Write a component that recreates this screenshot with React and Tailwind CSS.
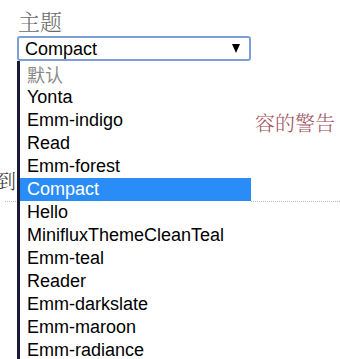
import React from 'react';

const themes = [
  'Yonta',
  'Emm-indigo',
  'Read',
  'Emm-forest',
  'Compact',
  'Hello',
  'MinifluxThemeCleanTeal',
  'Emm-teal',
  'Reader',
  'Emm-darkslate',
  'Emm-maroon',
  'Emm-radiance',
];

const App = () => {
  const selected = 'Compact';

  return (
    <div className="relative w-[340px] h-[359px] overflow-hidden bg-white font-['Liberation_Sans',Arial,sans-serif]">
      <div className="pl-[17px] pt-[7px]">
        <div className="pl-px text-[22px] leading-[28px] text-[#6b6b6b] font-light font-['Noto_Serif_CJK_SC','Noto_Sans_CJK_SC',serif]">
          主题
        </div>
        <div className="mt-px w-[234px] h-[25px] border-2 border-[#7d9fd8] rounded-[3px] flex items-center justify-between pl-[6px] pr-[9px]">
          <span className="text-[18px] leading-none text-black">{selected}</span>
          <svg width="8" height="9" viewBox="0 0 8 9">
            <polygon points="0,0 8,0 4,9" fill="#000" />
          </svg>
        </div>
      </div>

      <div className="mt-[50px] pl-[255px] text-[20px] leading-[24px] text-[#a0505e] font-light font-['Noto_Serif_CJK_SC','Noto_Sans_CJK_SC',serif]">
        容的警告
      </div>
      <div className="mt-[34px] w-[17px] overflow-hidden">
        <div className="-ml-[4px] whitespace-nowrap text-[20px] leading-[24px] text-[#333] font-light font-['Noto_Serif_CJK_SC','Noto_Sans_CJK_SC',serif]">
          到订
        </div>
      </div>
      <div className="mt-[8px] ml-[5px] border-b border-dotted border-[#bbb]"></div>

      <div className="absolute left-[17px] top-[61px] bottom-0 w-[234px] border-l-[3px] border-[#1a1a38] bg-white pt-[2px]">
        <div className="h-[23px] pl-[7px] flex items-center text-[18px] text-[#8a8a8a] font-['Noto_Sans_CJK_SC',sans-serif]">
          默认
        </div>
        {themes.map((t) => (
          <div
            key={t}
            className={
              t === selected
                ? 'h-[23px] pl-[7px] flex items-center text-[18px] bg-[#2a8df7] text-white'
                : 'h-[23px] pl-[7px] flex items-center text-[18px] text-black'
            }
          >
            {t}
          </div>
        ))}
      </div>
    </div>
  );
};

export default App;
